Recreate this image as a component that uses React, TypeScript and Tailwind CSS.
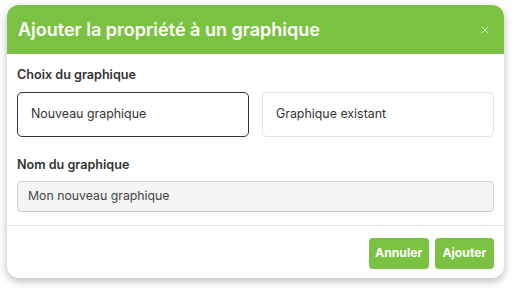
import { X } from 'lucide-react'

const font = { fontFamily: 'Inter, "Noto Sans", sans-serif' }

export default function App() {
  return (
    <div className="min-h-[291px] bg-white pl-[7px] pt-[5px]" style={font}>
      <div className="w-[497px] overflow-hidden rounded-[12px] bg-white shadow-[0_3px_8px_rgba(0,0,0,0.28)]">
        {/* header */}
        <div className="flex h-[49px] items-center justify-between bg-[#7cc242] pl-[11px] pr-[13px]">
          <h2 className="text-[18px] font-semibold leading-none text-white">
            Ajouter la propriété à un graphique
          </h2>
          <X className="h-[12px] w-[12px] text-[#dff0cf]" strokeWidth={2} aria-hidden="true" />
        </div>

        {/* body */}
        <div className="px-[10px] pb-[13px] pt-[12px]">
          <p className="text-[12.6px] font-semibold leading-[18px] text-[#333]">Choix du graphique</p>
          <div className="mt-[8px] grid grid-cols-2 gap-[13px]">
            <button className="flex h-[45px] items-center rounded-[5px] border border-[#333] px-[13px] text-left text-[12.4px] text-[#333]">
              Nouveau graphique
            </button>
            <button className="flex h-[45px] items-center rounded-[5px] border border-[#e3e3e3] px-[13px] text-left text-[12.4px] text-[#333]">
              Graphique existant
            </button>
          </div>

          <p className="mt-[19px] text-[12.6px] font-semibold leading-[18px] text-[#333]">Nom du graphique</p>
          <div className="mt-[7px] flex h-[31px] items-center rounded-[4px] border border-[#cfcfcf] bg-[#f4f4f4] px-[10px] text-[12.3px] text-[#444]">
            Mon nouveau graphique
          </div>
        </div>

        {/* footer */}
        <div className="flex justify-end gap-[6px] border-t border-[#e5e5e5] px-[10px] pb-[9px] pt-[12px]">
          <button className="h-[31px] rounded-[4px] bg-[#7cc242] px-[6.5px] text-[12.2px] font-bold text-white">
            Annuler
          </button>
          <button className="h-[31px] rounded-[4px] bg-[#7cc242] px-[7.5px] text-[12.2px] font-bold text-white">
            Ajouter
          </button>
        </div>
      </div>
    </div>
  )
}
